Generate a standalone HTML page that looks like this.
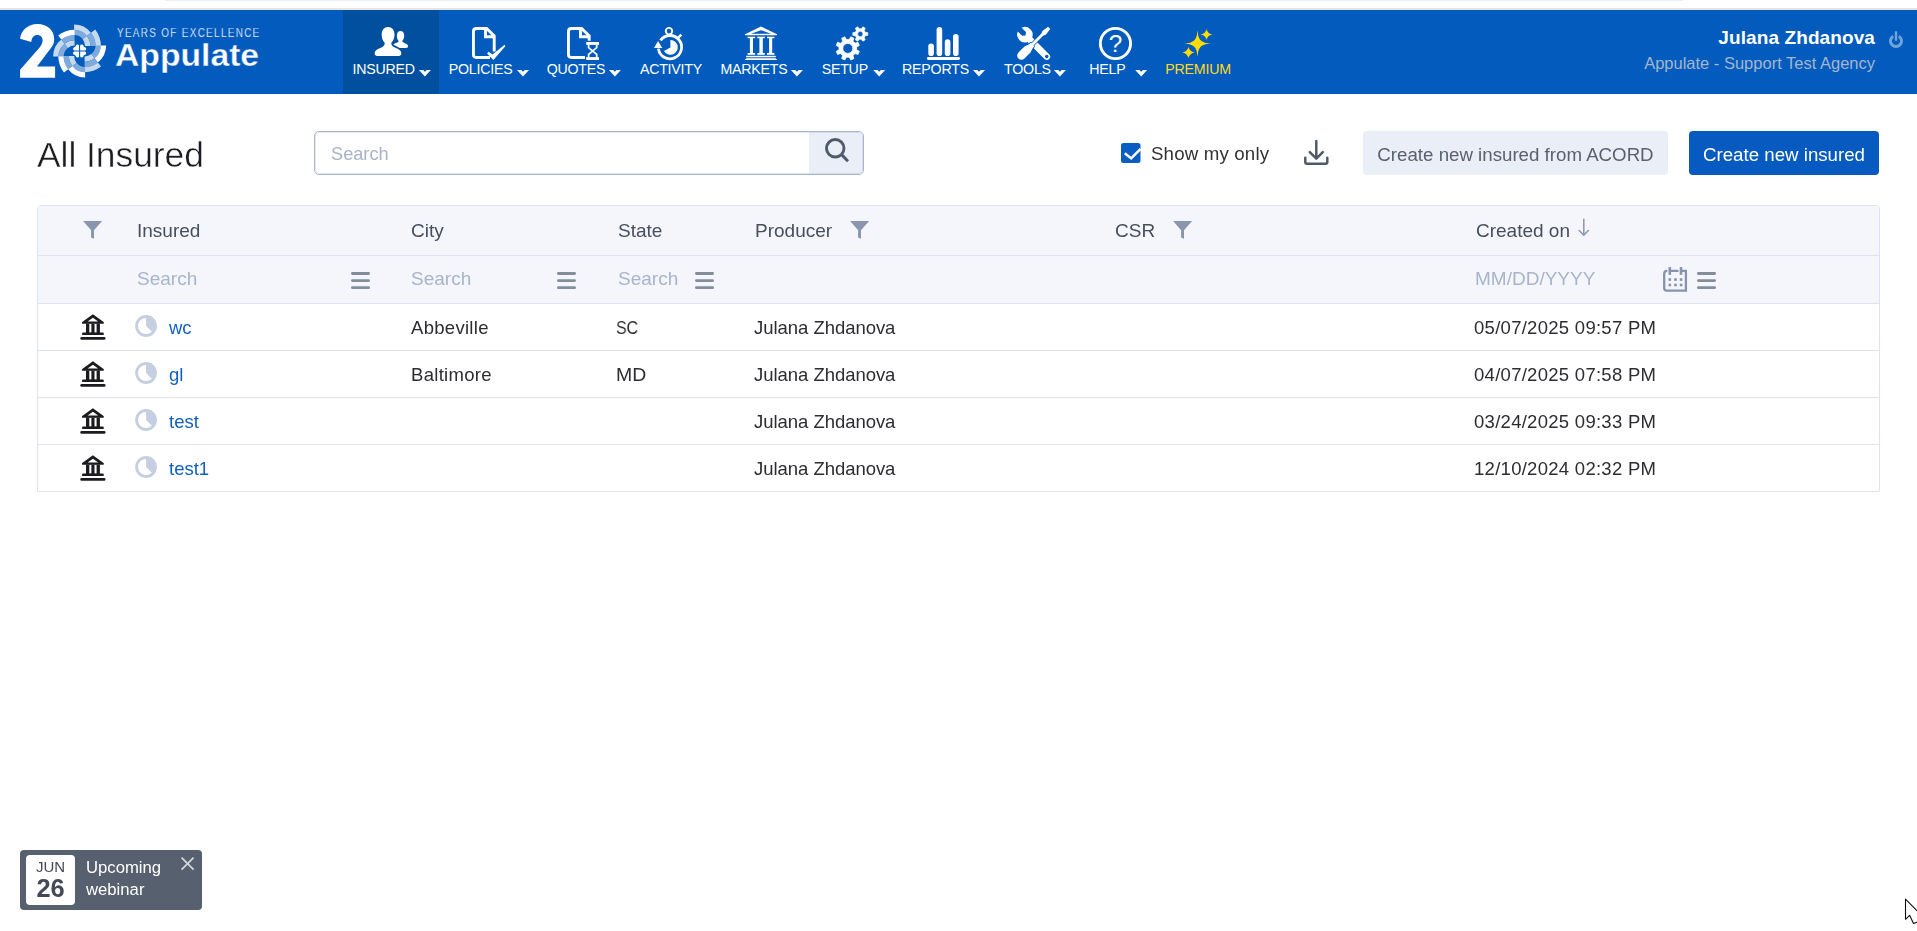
<!DOCTYPE html>
<html>
<head>
<meta charset="utf-8">
<title>All Insured</title>
<style>
*{box-sizing:border-box;margin:0;padding:0}
html,body{width:1917px;height:931px;overflow:hidden;background:#fff;font-family:"Liberation Sans",sans-serif;color:#333}
.abs{position:absolute}
#title,#sbox .ph,#chklbl,#b1,#b2,.h,.f,.c,#toast{will-change:transform}
#topline{position:absolute;left:0;top:8px;width:1917px;height:2px;background:#e6e6e0}
#hdr{position:absolute;left:0;top:10px;width:1917px;height:84px;background:#025bbd}
#active{position:absolute;left:343px;top:0;width:96px;height:84px;background:#01509f}
.nav{position:absolute;top:51px;height:16px;font-size:14.2px;line-height:16px;color:#fff;white-space:nowrap;letter-spacing:-0.22px}
.nav.prem{color:#ffd91a}
.car{position:absolute;top:59px;width:10px;height:6px}
.ico{position:absolute}
#uname{position:absolute;right:42px;top:17px;font-size:19px;letter-spacing:0.1px;line-height:22px;font-weight:bold;color:#fff;white-space:nowrap}
#uag{position:absolute;right:42px;top:43px;font-size:16.5px;line-height:20px;color:#a2b6cf;white-space:nowrap}
#title{position:absolute;left:36.7px;top:133px;font-size:35.4px;line-height:44px;color:#1c1c22;white-space:nowrap;letter-spacing:-0.03px;-webkit-text-stroke:0.45px #fff}
#sbox{position:absolute;left:314px;top:131px;width:550px;height:44px;border:1px solid #a9b5cd;border-radius:5px;background:#fff;overflow:hidden}
#sbox::after{content:"";position:absolute;left:0;top:0;right:0;bottom:0;border:1px solid rgba(169,181,205,.3);border-radius:4px}
#sbox .ph{position:absolute;left:16px;top:12.4px;font-size:18.2px;line-height:20px;color:#a9b3c9}
#sbox .btn{position:absolute;right:0;top:0;width:54px;height:42px;background:#eaeef7}
#chk{position:absolute;left:1121px;top:143px;width:20px;height:20px;background:#0a5dc2;border-radius:3px}
#chklbl{position:absolute;left:1150.8px;top:143.3px;font-size:18.7px;letter-spacing:0.16px;line-height:22px;color:#333;white-space:nowrap}
#b1{position:absolute;left:1363px;top:131px;width:305px;height:44px;background:#eaeef7;border-radius:4px;font-size:18.7px;line-height:48.4px;text-align:center;color:#596170;white-space:nowrap}
#b2{position:absolute;left:1689px;top:131px;width:190px;height:44px;background:#075abf;border-radius:4px;font-size:18.7px;line-height:48.4px;text-align:center;color:#fff;white-space:nowrap}
#tbl{position:absolute;left:37px;top:205px;width:1843px;height:287px;border:1px solid #dfe3ee;border-radius:4px 4px 0 0;background:#fff;overflow:hidden}
#th{position:absolute;left:0;top:0;width:1841px;height:50px;background:#f5f6fb;border-bottom:1px solid #dfe3ee}
#tf{position:absolute;left:0;top:50px;width:1841px;height:48px;background:#f5f6fb;border-bottom:1px solid #dfe3ee}
.h{position:absolute;top:219.6px;font-size:19px;line-height:22px;color:#474e5c;white-space:nowrap}
.f{position:absolute;top:267.5px;font-size:19px;line-height:22px;color:#a9b4cb;white-space:nowrap}
.row{position:absolute;left:38px;width:1841px;height:1px;background:#dfe3ee}
.c{position:absolute;font-size:18.5px;line-height:22px;color:#2c2c31;white-space:nowrap}
.c.ci{letter-spacing:0.3px}
.c.st{transform:scaleX(0.86);transform-origin:0 0}
.c.p{letter-spacing:-0.04px}
.c.d{letter-spacing:0.28px}
.c a{color:#1060bf;text-decoration:none}
#toast{position:absolute;left:20px;top:850px;width:182px;height:60px;background:#57606e;border-radius:4px}
#toast .d{position:absolute;left:6px;top:5px;width:49px;height:50px;background:#fff;border-radius:4px;text-align:center;color:#454857}
#toast .m{position:absolute;left:0;width:49px;top:4px;font-size:15px;line-height:16px}
#toast .n{position:absolute;left:0;width:49px;top:20.3px;font-size:25.4px;line-height:26px;font-weight:bold}
#yoe{position:absolute;left:117px;top:17px;font-size:12px;line-height:12px;color:#fff;white-space:nowrap;letter-spacing:1.6px;transform:scaleX(0.826);transform-origin:0 0;-webkit-text-stroke:0.25px #025bbd}
#appl{position:absolute;left:115.2px;top:28.4px;font-size:31.7px;line-height:34px;font-weight:bold;color:#fff;white-space:nowrap;transform:scaleX(1.063);transform-origin:0 0;-webkit-text-stroke:0.35px #025bbd}
#toast .t{position:absolute;left:66px;top:7.3px;font-size:16.7px;line-height:21.8px;color:#fff;white-space:nowrap}
</style>
</head>
<body>
<div style="position:absolute;left:165px;top:0;width:1518px;height:1px;background:#e9eef7"></div>
<div id="topline"></div>
<div id="hdr">
  <div id="active"></div>
  <svg class="ico" style="left:0;top:0" width="300" height="84" viewBox="0 0 300 84"><path d="M20.10 28.80 C20.60 21.50 27.50 14.10 37.40 14.10 C47.50 14.10 54.20 20.50 54.20 29.20 C54.20 33.50 52.80 36.00 50.20 39.00 L37.00 56.50 L55.10 56.50 L55.10 67.80 L20.10 67.80 L20.10 59.80 L39.60 37.40 C41.80 34.60 42.60 32.60 42.60 30.20 C42.60 27.20 40.40 25.10 37.40 25.10 C33.80 25.10 31.60 27.80 31.30 32.00 Z" fill="#fff"/><path d="M74.10 19.80 A16.20 16.20 0 0 1 86.87 26.03 L82.69 29.29 A10.90 10.90 0 0 0 74.10 25.10 Z" fill="#7eaadc"/>
<path d="M86.87 26.03 A16.20 16.20 0 0 1 90.30 36.00 L85.00 36.00 A10.90 10.90 0 0 0 82.69 29.29 Z" fill="#c5d9ef"/>
<path d="M74.10 14.50 A21.50 21.50 0 0 1 91.04 22.76 L86.87 26.03 A16.20 16.20 0 0 0 74.10 19.80 Z" fill="#c5d9ef"/>
<path d="M91.04 22.76 A21.50 21.50 0 0 1 95.60 36.00 L90.30 36.00 A16.20 16.20 0 0 0 86.87 26.03 Z" fill="#7eaadc"/>
<path d="M95.22 19.50 A26.80 26.80 0 0 1 100.90 36.00 L95.60 36.00 A21.50 21.50 0 0 0 91.04 22.76 Z" fill="#c5d9ef"/>
<path d="M100.80 35.50 A16.20 16.20 0 0 1 94.57 48.27 L91.31 44.09 A10.90 10.90 0 0 0 95.50 35.50 Z" fill="#7eaadc"/>
<path d="M94.57 48.27 A16.20 16.20 0 0 1 84.60 51.70 L84.60 46.40 A10.90 10.90 0 0 0 91.31 44.09 Z" fill="#c5d9ef"/>
<path d="M106.10 35.50 A21.50 21.50 0 0 1 97.84 52.44 L94.57 48.27 A16.20 16.20 0 0 0 100.80 35.50 Z" fill="#ffffff"/>
<path d="M97.84 52.44 A21.50 21.50 0 0 1 84.60 57.00 L84.60 51.70 A16.20 16.20 0 0 0 94.57 48.27 Z" fill="#7eaadc"/>
<path d="M101.10 56.62 A26.80 26.80 0 0 1 84.60 62.30 L84.60 57.00 A21.50 21.50 0 0 0 97.84 52.44 Z" fill="#c5d9ef"/>
<path d="M85.10 62.20 A16.20 16.20 0 0 1 72.33 55.97 L76.51 52.71 A10.90 10.90 0 0 0 85.10 56.90 Z" fill="#7eaadc"/>
<path d="M72.33 55.97 A16.20 16.20 0 0 1 68.90 46.00 L74.20 46.00 A10.90 10.90 0 0 0 76.51 52.71 Z" fill="#c5d9ef"/>
<path d="M85.10 67.50 A21.50 21.50 0 0 1 68.16 59.24 L72.33 55.97 A16.20 16.20 0 0 0 85.10 62.20 Z" fill="#ffffff"/>
<path d="M68.16 59.24 A21.50 21.50 0 0 1 63.60 46.00 L68.90 46.00 A16.20 16.20 0 0 0 72.33 55.97 Z" fill="#7eaadc"/>
<path d="M63.98 62.50 A26.80 26.80 0 0 1 58.30 46.00 L63.60 46.00 A21.50 21.50 0 0 0 68.16 59.24 Z" fill="#ffffff"/>
<path d="M58.40 46.50 A16.20 16.20 0 0 1 64.63 33.73 L67.89 37.91 A10.90 10.90 0 0 0 63.70 46.50 Z" fill="#7eaadc"/>
<path d="M64.63 33.73 A16.20 16.20 0 0 1 74.60 30.30 L74.60 35.60 A10.90 10.90 0 0 0 67.89 37.91 Z" fill="#c5d9ef"/>
<path d="M53.10 46.50 A21.50 21.50 0 0 1 61.36 29.56 L64.63 33.73 A16.20 16.20 0 0 0 58.40 46.50 Z" fill="#c5d9ef"/>
<path d="M61.36 29.56 A21.50 21.50 0 0 1 74.60 25.00 L74.60 30.30 A16.20 16.20 0 0 0 64.63 33.73 Z" fill="#7eaadc"/>
<path d="M58.10 25.38 A26.80 26.80 0 0 1 74.60 19.70 L74.60 25.00 A21.50 21.50 0 0 0 61.36 29.56 Z" fill="#ffffff"/>
<path transform="rotate(0 79.6 41.0)" d="M80.14999999999999 40.45 L80.14999999999999 35.8 Q80.3 34.3 82.0 34.5 Q83.5 34.8 83.69999999999999 36.4 L84.3 37.0 Q86.0 37.2 86.19999999999999 38.7 Q86.3 40.3 84.8 40.45 Z" fill="#fff"/>
<path transform="rotate(90 79.6 41.0)" d="M80.14999999999999 40.45 L80.14999999999999 35.8 Q80.3 34.3 82.0 34.5 Q83.5 34.8 83.69999999999999 36.4 L84.3 37.0 Q86.0 37.2 86.19999999999999 38.7 Q86.3 40.3 84.8 40.45 Z" fill="#fff"/>
<path transform="rotate(180 79.6 41.0)" d="M80.14999999999999 40.45 L80.14999999999999 35.8 Q80.3 34.3 82.0 34.5 Q83.5 34.8 83.69999999999999 36.4 L84.3 37.0 Q86.0 37.2 86.19999999999999 38.7 Q86.3 40.3 84.8 40.45 Z" fill="#fff"/>
<path transform="rotate(270 79.6 41.0)" d="M80.14999999999999 40.45 L80.14999999999999 35.8 Q80.3 34.3 82.0 34.5 Q83.5 34.8 83.69999999999999 36.4 L84.3 37.0 Q86.0 37.2 86.19999999999999 38.7 Q86.3 40.3 84.8 40.45 Z" fill="#fff"/></svg><div id="yoe">YEARS OF EXCELLENCE</div><div id="appl">Appulate</div>
  <div class="nav" style="left:352.5px">INSURED</div>
<div class="nav" style="left:448.8px">POLICIES</div>
<div class="nav" style="left:546.7px">QUOTES</div>
<div class="nav" style="left:639.9px">ACTIVITY</div>
<div class="nav" style="left:720.4px">MARKETS</div>
<div class="nav" style="left:821.7px">SETUP</div>
<div class="nav" style="left:902.1px">REPORTS</div>
<div class="nav" style="left:1004.1px">TOOLS</div>
<div class="nav" style="left:1089.3px">HELP</div>
<div class="nav prem" style="left:1165.3px">PREMIUM</div>
<svg class="ico" style="left:0;top:0" width="1917" height="84" viewBox="0 0 1917 84"><path d="M418.9 60 L423.2 60 L424.9 61.7 L426.6 60 L430.9 60 L424.9 66.4 Z" fill="#fff"/><path d="M517.0 60 L521.3 60 L523.0 61.7 L524.7 60 L529.0 60 L523.0 66.4 Z" fill="#fff"/><path d="M608.9 60 L613.2 60 L614.9 61.7 L616.6 60 L620.9 60 L614.9 66.4 Z" fill="#fff"/><path d="M790.9 60 L795.2 60 L796.9 61.7 L798.6 60 L802.9 60 L796.9 66.4 Z" fill="#fff"/><path d="M873.2 60 L877.5 60 L879.2 61.7 L880.9 60 L885.2 60 L879.2 66.4 Z" fill="#fff"/><path d="M973.0 60 L977.3 60 L979.0 61.7 L980.7 60 L985.0 60 L979.0 66.4 Z" fill="#fff"/><path d="M1053.9 60 L1058.2 60 L1059.9 61.7 L1061.6 60 L1065.9 60 L1059.9 66.4 Z" fill="#fff"/><path d="M1135.2 60 L1139.5 60 L1141.2 61.7 L1142.9 60 L1147.2 60 L1141.2 66.4 Z" fill="#fff"/></svg>
<svg class="ico" style="left:365px;top:10px" width="60" height="45" viewBox="0 0 60 45"><path d="M35.5 11 C37.8 11 39.2 12.8 39.2 15.5 C39.2 18 38.3 19.8 37.3 20.8 C37.3 21.8 38 22.3 39 22.8 L41.5 24 C42.6 24.6 43 25.3 43 26.3 C43 27.3 42.3 28 41.3 28 L34.8 28 L28.3 24.6 C28.8 23.8 30 23.4 31 23 L32.5 22.4 C33.4 22 33.7 21.5 33.6 20.8 C32.6 19.8 31.9 18 31.9 15.5 C31.9 12.8 33.2 11 35.5 11 Z" fill="#fff"/><path d="M23.1 7 C27 7 29.5 10 29.5 14.5 C29.5 18.5 28 21 26.4 22.5 C26 24.6 27 26 29 27 L33 28.9 C35.5 30.1 36.3 31.5 36.3 33.5 C36.3 35 35.3 36 33.8 36 L12.2 36 C10.7 36 9.7 35 9.7 33.5 C9.7 31.5 10.5 30.1 13 28.9 L17 27.2 C19 26.2 20 24.6 19.6 22.5 C18 21 16.7 18.5 16.7 14.5 C16.7 10 19.2 7 23.1 7 Z" fill="#fff" stroke="#01509f" stroke-width="1.6" paint-order="stroke"/></svg>
<svg class="ico" style="left:460px;top:10px" width="60" height="45" viewBox="0 0 60 45"><path d="M34.2 31.5 V15.9 L26.6 8.45 H16.4 Q13.45 8.45 13.45 11.4 V34.5 Q13.45 37.45 16.4 37.45 H30" fill="none" stroke="#fff" stroke-width="2.9" stroke-linejoin="miter"/><path d="M25.5 8.5 V16.7 H34.2" fill="none" stroke="#fff" stroke-width="2.9"/><path d="M27.1 33.4 L28.6 31.8 L32.5 34.6 L44.6 24.8 L45.3 26.2 L33.4 40 Z" fill="#fff"/></svg>
<svg class="ico" style="left:555px;top:10px" width="60" height="45" viewBox="0 0 60 45"><path d="M34.2 20.8 V15.9 L26.6 8.45 H16.4 Q13.45 8.45 13.45 11.4 V34.5 Q13.45 37.45 16.4 37.45 H30" fill="none" stroke="#fff" stroke-width="2.9" stroke-linejoin="miter"/><path d="M25.5 8.5 V16.7 H34.2" fill="none" stroke="#fff" stroke-width="2.9"/><rect x="31.2" y="22" width="12.8" height="2.9" fill="#fff"/><rect x="31.2" y="37.1" width="12.8" height="2.9" fill="#fff"/><path d="M33.6 24.5 V27.6 L41.7 34.4 V37.5 M41.7 24.5 V27.6 L33.6 34.4 V37.5" fill="none" stroke="#fff" stroke-width="1.7"/></svg>
<svg class="ico" style="left:640px;top:10px" width="60" height="45" viewBox="0 0 60 45"><path d="M20.46 20.4 A11.65 11.65 0 1 1 18.4 28.6" fill="none" stroke="#fff" stroke-width="2.8"/><path d="M18.1 21 L22.3 27.9 L14 27.9 Z" fill="#fff"/><circle cx="29" cy="11.1" r="3.25" fill="none" stroke="#fff" stroke-width="1.9"/><path d="M38.3 17.7 L41.3 14.7" stroke="#fff" stroke-width="2.6" fill="none"/><path d="M30.4 27.4 L30.4 19.9 A7.4 7.4 0 1 1 24 31.1 Z" fill="#fff"/></svg>
<svg class="ico" style="left:730px;top:10px" width="60" height="45" viewBox="0 0 60 45"><path fill-rule="evenodd" d="M30.95 6.6 L47 14.2 L47 15.3 L15 15.3 L15 14.2 Z M30.95 10.2 L21 13.7 L41 13.7 Z" fill="#fff"/><rect x="17.6" y="16.7" width="7.5" height="1.5" fill="#fff"/><rect x="19.9" y="17" width="3.1" height="16.5" fill="#fff"/><rect x="17.6" y="33" width="7.5" height="1.8" fill="#fff"/><rect x="27.3" y="16.7" width="7.5" height="1.5" fill="#fff"/><rect x="29.4" y="17" width="3.4" height="16.5" fill="#fff"/><rect x="27.3" y="33" width="7.5" height="1.8" fill="#fff"/><rect x="37.0" y="16.7" width="7.4" height="1.5" fill="#fff"/><rect x="39.1" y="17" width="3.1" height="16.5" fill="#fff"/><rect x="37.0" y="33" width="7.4" height="1.8" fill="#fff"/><rect x="16.2" y="35.8" width="29.6" height="1.5" fill="#fff"/><path d="M16.5 38.2 L45.5 38.2 L47 39.4 L47 40.1 L15 40.1 L15 39.4 Z" fill="#fff"/></svg>
<svg class="ico" style="left:820px;top:10px" width="60" height="45" viewBox="0 0 60 45"><path d="M36.58 29.86 L39.33 31.36 L38.04 34.46 L35.04 33.57 L32.97 35.64 L33.86 38.64 L30.76 39.93 L29.26 37.18 L26.34 37.18 L24.84 39.93 L21.74 38.64 L22.63 35.64 L20.56 33.57 L17.56 34.46 L16.27 31.36 L19.02 29.86 L19.02 26.94 L16.27 25.44 L17.56 22.34 L20.56 23.23 L22.63 21.16 L21.74 18.16 L24.84 16.87 L26.34 19.62 L29.26 19.62 L30.76 16.87 L33.86 18.16 L32.97 21.16 L35.04 23.23 L38.04 22.34 L39.33 25.44 L36.58 26.94 Z M22.80 28.40 a5.00 5.00 0 1 0 10.00 0 a5.00 5.00 0 1 0 -10.00 0 Z" fill="#fff" fill-rule="evenodd" stroke="#fff" stroke-width="0.8" stroke-linejoin="round"/><path d="M45.34 12.36 L47.78 12.65 L47.78 15.35 L45.34 15.64 L44.24 17.55 L45.21 19.80 L42.87 21.15 L41.40 19.18 L39.20 19.18 L37.73 21.15 L35.39 19.80 L36.36 17.55 L35.26 15.64 L32.82 15.35 L32.82 12.65 L35.26 12.36 L36.36 10.45 L35.39 8.20 L37.73 6.85 L39.20 8.82 L41.40 8.82 L42.87 6.85 L45.21 8.20 L44.24 10.45 Z M37.60 14.00 a2.70 2.70 0 1 0 5.40 0 a2.70 2.70 0 1 0 -5.40 0 Z" fill="#fff" fill-rule="evenodd" stroke="#fff" stroke-width="0.7" stroke-linejoin="round"/></svg>
<svg class="ico" style="left:910px;top:10px" width="60" height="45" viewBox="0 0 60 45"><rect x="18.3" y="23.5" width="5.6" height="12.5" rx="2.8" fill="#fff"/><rect x="26.6" y="7.0" width="5.6" height="29.0" rx="2.8" fill="#fff"/><rect x="34.8" y="19.3" width="5.6" height="16.7" rx="2.8" fill="#fff"/><rect x="43.0" y="14.0" width="5.6" height="22.0" rx="2.8" fill="#fff"/><rect x="16.9" y="37.1" width="33.1" height="2.9" rx="1.45" fill="#fff"/></svg>
<svg class="ico" style="left:1000px;top:10px" width="60" height="45" viewBox="0 0 60 45"><g transform="translate(24.9 14.7) rotate(-45)"><path d="M-2.7 -7.3 A7.8 7.8 0 0 0 -3.3 7.0 L-3.3 31 A3.3 3.3 0 0 0 3.3 31 L3.3 7.0 A7.8 7.8 0 0 0 2.7 -7.3 L2.7 -1.2 L0 1.0 L-2.7 -1.2 Z M-1.7 30.9 a1.7 1.7 0 1 0 3.4 0 a1.7 1.7 0 1 0 -3.4 0 Z" fill="#fff" fill-rule="evenodd"/></g><g transform="translate(34.1 22.9) rotate(45)"><path d="M-1.5 -21.3 L1.5 -21.3 L2.4 -15 L2.3 -13.4 Q1.4 -12.6 1.4 -11.4 L1.4 2.0 L2.6 2.6 L2.6 4.0 Q3.2 6.5 4.2 9 L4.3 17.9 A4.3 4.3 0 0 1 -4.3 17.9 L-4.2 9 Q-3.2 6.5 -2.6 4.0 L-2.6 2.6 L-1.4 2.0 L-1.4 -11.4 Q-1.4 -12.6 -2.3 -13.4 L-2.4 -15 Z" fill="#fff" stroke="#025bbd" stroke-width="1.5" paint-order="stroke"/></g></svg>
<svg class="ico" style="left:1085px;top:10px" width="60" height="45" viewBox="0 0 60 45"><circle cx="30.45" cy="23.5" r="15.1" fill="none" stroke="#fff" stroke-width="2.9"/><text x="30.5" y="32.2" text-anchor="middle" font-family="Liberation Sans" font-size="24.3" fill="#fff">?</text></svg>
<svg class="ico" style="left:1165px;top:10px" width="60" height="45" viewBox="0 0 60 45"><path d="M32.47 10.37 L32.77 12.57 L33.02 14.48 L33.37 16.30 L34.20 18.13 L34.67 19.07 L35.29 19.97 L35.72 20.32 L36.07 20.75 L36.97 21.37 L37.91 21.84 L39.74 22.67 L41.56 23.02 L43.47 23.27 L45.67 23.57 L43.47 23.87 L41.56 24.12 L39.74 24.47 L37.91 25.30 L36.97 25.77 L36.07 26.39 L35.72 26.82 L35.29 27.17 L34.67 28.07 L34.20 29.01 L33.37 30.84 L33.02 32.66 L32.77 34.57 L32.47 36.77 L32.17 34.57 L31.92 32.66 L31.57 30.84 L30.74 29.01 L30.27 28.07 L29.65 27.17 L29.22 26.82 L28.87 26.39 L27.97 25.77 L27.03 25.30 L25.20 24.47 L23.38 24.12 L21.47 23.87 L19.27 23.57 L21.47 23.27 L23.38 23.02 L25.20 22.67 L27.03 21.84 L27.97 21.37 L28.87 20.75 L29.22 20.32 L29.65 19.97 L30.27 19.07 L30.74 18.13 L31.57 16.30 L31.92 14.48 L32.17 12.57 Z" fill="#ffdd00"/><path d="M41.50 8.90 L41.73 9.74 L42.00 10.64 L42.60 11.60 L43.41 12.65 L44.50 13.44 L45.50 14.01 L46.43 14.28 L47.30 14.50 L46.43 14.72 L45.50 14.99 L44.50 15.56 L43.41 16.35 L42.60 17.40 L42.00 18.36 L41.73 19.26 L41.50 20.10 L41.27 19.26 L41.00 18.36 L40.40 17.40 L39.59 16.35 L38.50 15.56 L37.50 14.99 L36.57 14.72 L35.70 14.50 L36.57 14.28 L37.50 14.01 L38.50 13.44 L39.59 12.65 L40.40 11.60 L41.00 10.64 L41.27 9.74 Z" fill="#ffdd00"/><path d="M23.46 26.80 L23.71 27.66 L24.00 28.57 L24.63 29.55 L25.51 30.62 L26.67 31.42 L27.73 32.00 L28.73 32.27 L29.66 32.50 L28.73 32.73 L27.73 33.00 L26.67 33.58 L25.51 34.38 L24.63 35.45 L24.00 36.43 L23.71 37.34 L23.46 38.20 L23.21 37.34 L22.92 36.43 L22.29 35.45 L21.41 34.38 L20.25 33.58 L19.19 33.00 L18.19 32.73 L17.26 32.50 L18.19 32.27 L19.19 32.00 L20.25 31.42 L21.41 30.62 L22.29 29.55 L22.92 28.57 L23.21 27.66 Z" fill="#ffdd00"/></svg>
<svg class="ico" style="left:1885.9px;top:18.9px" width="20" height="24" viewBox="0 0 20 24"><path d="M12.78 7.2 A5.55 5.55 0 1 1 7.22 7.2" fill="none" stroke="#6fa3dd" stroke-width="3"/><path d="M10 3.2 V10.8" stroke="#6fa3dd" stroke-width="2.4" stroke-linecap="round"/></svg>
  <div id="uname">Julana Zhdanova</div>
  <div id="uag">Appulate - Support Test Agency</div>
</div>

<div id="title">All Insured</div>
<div id="sbox"><div class="ph">Search</div><div class="btn"></div></div>
<div id="chklbl">Show my only</div>
<div id="b1">Create new insured from ACORD</div>
<div id="b2">Create new insured</div>

<div id="tbl"><div id="th"></div><div id="tf"></div></div>
<div class="h" style="left:137px">Insured</div>
<div class="h" style="left:411px">City</div>
<div class="h" style="left:618px">State</div>
<div class="h" style="left:755px">Producer</div>
<div class="h" style="left:1115px">CSR</div>
<div class="h" style="left:1476px">Created on</div>
<div class="f" style="left:137px">Search</div>
<div class="f" style="left:411px">Search</div>
<div class="f" style="left:618px">Search</div>
<div class="f" style="left:1475px">MM/DD/YYYY</div>

<div class="row" style="top:350px"></div>
<div class="row" style="top:397px"></div>
<div class="row" style="top:444px"></div>

<svg class="ico" style="left:79px;top:314px" width="28" height="27" viewBox="0 0 28 27"><path fill-rule="evenodd" d="M13.9 0.2 L24.6 8.0 Q25.2 8.6 24.6 9.8 L3.2 9.8 Q2.6 8.6 3.2 8.0 Z M13.9 3.8 L8.6 7.6 L19.2 7.6 Z" fill="#1b1b20"/><path d="M7 9.5 H20.9 V19 H7 Z M10.3 9.8 V18.7 H12.4 V9.8 Z M15.5 9.8 V18.7 H17.6 V9.8 Z" fill-rule="evenodd" fill="#1b1b20"/><rect x="3" y="18.5" width="21.8" height="2.6" rx="1.2" fill="#1b1b20"/><rect x="1.3" y="23" width="25.2" height="2.7" rx="1.3" fill="#1b1b20"/></svg>
<svg class="ico" style="left:134px;top:314px" width="24" height="24" viewBox="0 0 24 24"><circle cx="12.06" cy="12" r="9.5" fill="none" stroke="#c6cfe1" stroke-width="2.8"/><path d="M12.06 12 L12.06 2 A10 10 0 0 1 19.2 19.0 Z" fill="#c6cfe1"/></svg>
<div class="c" style="left:168.7px;top:316.75px"><a>wc</a></div>
<div class="c ci" style="left:410.6px;top:316.75px">Abbeville</div>
<div class="c st" style="left:616.4px;top:316.75px;transform:scaleX(0.86)">SC</div>
<div class="c p" style="left:754px;top:316.75px">Julana Zhdanova</div>
<div class="c d" style="left:1474px;top:316.75px">05/07/2025 09:57 PM</div>
<svg class="ico" style="left:79px;top:361px" width="28" height="27" viewBox="0 0 28 27"><path fill-rule="evenodd" d="M13.9 0.2 L24.6 8.0 Q25.2 8.6 24.6 9.8 L3.2 9.8 Q2.6 8.6 3.2 8.0 Z M13.9 3.8 L8.6 7.6 L19.2 7.6 Z" fill="#1b1b20"/><path d="M7 9.5 H20.9 V19 H7 Z M10.3 9.8 V18.7 H12.4 V9.8 Z M15.5 9.8 V18.7 H17.6 V9.8 Z" fill-rule="evenodd" fill="#1b1b20"/><rect x="3" y="18.5" width="21.8" height="2.6" rx="1.2" fill="#1b1b20"/><rect x="1.3" y="23" width="25.2" height="2.7" rx="1.3" fill="#1b1b20"/></svg>
<svg class="ico" style="left:134px;top:361px" width="24" height="24" viewBox="0 0 24 24"><circle cx="12.06" cy="12" r="9.5" fill="none" stroke="#c6cfe1" stroke-width="2.8"/><path d="M12.06 12 L12.06 2 A10 10 0 0 1 19.2 19.0 Z" fill="#c6cfe1"/></svg>
<div class="c" style="left:168.7px;top:363.75px"><a>gl</a></div>
<div class="c ci" style="left:410.6px;top:363.75px">Baltimore</div>
<div class="c st" style="left:616.4px;top:363.75px;transform:scaleX(1.05)">MD</div>
<div class="c p" style="left:754px;top:363.75px">Julana Zhdanova</div>
<div class="c d" style="left:1474px;top:363.75px">04/07/2025 07:58 PM</div>
<svg class="ico" style="left:79px;top:408px" width="28" height="27" viewBox="0 0 28 27"><path fill-rule="evenodd" d="M13.9 0.2 L24.6 8.0 Q25.2 8.6 24.6 9.8 L3.2 9.8 Q2.6 8.6 3.2 8.0 Z M13.9 3.8 L8.6 7.6 L19.2 7.6 Z" fill="#1b1b20"/><path d="M7 9.5 H20.9 V19 H7 Z M10.3 9.8 V18.7 H12.4 V9.8 Z M15.5 9.8 V18.7 H17.6 V9.8 Z" fill-rule="evenodd" fill="#1b1b20"/><rect x="3" y="18.5" width="21.8" height="2.6" rx="1.2" fill="#1b1b20"/><rect x="1.3" y="23" width="25.2" height="2.7" rx="1.3" fill="#1b1b20"/></svg>
<svg class="ico" style="left:134px;top:408px" width="24" height="24" viewBox="0 0 24 24"><circle cx="12.06" cy="12" r="9.5" fill="none" stroke="#c6cfe1" stroke-width="2.8"/><path d="M12.06 12 L12.06 2 A10 10 0 0 1 19.2 19.0 Z" fill="#c6cfe1"/></svg>
<div class="c" style="left:168.7px;top:410.75px"><a>test</a></div>
<div class="c p" style="left:754px;top:410.75px">Julana Zhdanova</div>
<div class="c d" style="left:1474px;top:410.75px">03/24/2025 09:33 PM</div>
<svg class="ico" style="left:79px;top:455px" width="28" height="27" viewBox="0 0 28 27"><path fill-rule="evenodd" d="M13.9 0.2 L24.6 8.0 Q25.2 8.6 24.6 9.8 L3.2 9.8 Q2.6 8.6 3.2 8.0 Z M13.9 3.8 L8.6 7.6 L19.2 7.6 Z" fill="#1b1b20"/><path d="M7 9.5 H20.9 V19 H7 Z M10.3 9.8 V18.7 H12.4 V9.8 Z M15.5 9.8 V18.7 H17.6 V9.8 Z" fill-rule="evenodd" fill="#1b1b20"/><rect x="3" y="18.5" width="21.8" height="2.6" rx="1.2" fill="#1b1b20"/><rect x="1.3" y="23" width="25.2" height="2.7" rx="1.3" fill="#1b1b20"/></svg>
<svg class="ico" style="left:134px;top:455px" width="24" height="24" viewBox="0 0 24 24"><circle cx="12.06" cy="12" r="9.5" fill="none" stroke="#c6cfe1" stroke-width="2.8"/><path d="M12.06 12 L12.06 2 A10 10 0 0 1 19.2 19.0 Z" fill="#c6cfe1"/></svg>
<div class="c" style="left:168.7px;top:457.75px"><a>test1</a></div>
<div class="c p" style="left:754px;top:457.75px">Julana Zhdanova</div>
<div class="c d" style="left:1474px;top:457.75px">12/10/2024 02:32 PM</div>
<svg class="ico" style="left:820px;top:133px" width="34" height="34" viewBox="0 0 34 34"><circle cx="15.25" cy="15.3" r="8.75" fill="none" stroke="#505a6b" stroke-width="2.9"/><path d="M21.6 21.6 L28.0 28.2" stroke="#505a6b" stroke-width="3"/></svg>
<svg class="ico" style="left:1121px;top:143px" width="20" height="20" viewBox="0 0 20 20"><rect x="0" y="0" width="19.5" height="20" rx="2.5" fill="#0a5dc2"/><path d="M3.8 10.2 L10.2 15.4 L19.6 5.8" fill="none" stroke="#fff" stroke-width="2.5"/></svg>
<svg class="ico" style="left:1300px;top:136px" width="32" height="32" viewBox="0 0 32 32"><path d="M16.3 5.0 V22 M9.8 16.1 L16.3 22.6 L22.8 16.1 M5.3 21.8 V26 Q5.3 27.7 7 27.7 H25.6 Q27.3 27.7 27.3 26 V21.8" fill="none" stroke="#4f596a" stroke-width="2.5" stroke-linecap="round" stroke-linejoin="round"/></svg>
<svg class="ico" style="left:83.05px;top:221px" width="20" height="19" viewBox="0 0 20 19"><path d="M0.1 0.1 H19.1 L11.0 9.3 V17.8 L8.1 16.4 V9.3 Z" fill="#8a96ad"/></svg>
<svg class="ico" style="left:849.8px;top:221px" width="20" height="19" viewBox="0 0 20 19"><path d="M0.1 0.1 H19.1 L11.0 9.3 V17.8 L8.1 16.4 V9.3 Z" fill="#8a96ad"/></svg>
<svg class="ico" style="left:1172.8px;top:221px" width="20" height="19" viewBox="0 0 20 19"><path d="M0.1 0.1 H19.1 L11.0 9.3 V17.8 L8.1 16.4 V9.3 Z" fill="#8a96ad"/></svg>
<svg class="ico" style="left:351px;top:272px" width="20" height="18" viewBox="0 0 20 18"><path d="M1.4 1.5 H17.6 M1.4 8.6 H17.6 M1.4 15.7 H17.6" stroke="#838d9c" stroke-width="2.8" stroke-linecap="round"/></svg>
<svg class="ico" style="left:557px;top:272px" width="20" height="18" viewBox="0 0 20 18"><path d="M1.4 1.5 H17.6 M1.4 8.6 H17.6 M1.4 15.7 H17.6" stroke="#838d9c" stroke-width="2.8" stroke-linecap="round"/></svg>
<svg class="ico" style="left:695px;top:272px" width="20" height="18" viewBox="0 0 20 18"><path d="M1.4 1.5 H17.6 M1.4 8.6 H17.6 M1.4 15.7 H17.6" stroke="#838d9c" stroke-width="2.8" stroke-linecap="round"/></svg>
<svg class="ico" style="left:1697px;top:272px" width="20" height="18" viewBox="0 0 20 18"><path d="M1.4 1.5 H17.6 M1.4 8.6 H17.6 M1.4 15.7 H17.6" stroke="#838d9c" stroke-width="2.8" stroke-linecap="round"/></svg>
<svg class="ico" style="left:1655px;top:260px" width="40" height="40" viewBox="0 0 40 40"><path d="M11.4 10.8 Q9.2 11.2 9.2 14 V28 Q9.2 30.7 12 30.7 H30.9 V10.9 H27.3 M15.9 10.9 H22.6" fill="none" stroke="#8593ad" stroke-width="2.3" stroke-linecap="round" stroke-linejoin="miter"/><rect x="13.5" y="7.1" width="2.6" height="7.7" fill="#8593ad"/><rect x="24.7" y="7.1" width="2.6" height="7.7" fill="#8593ad"/><rect x="13.50" y="18.25" width="2.6" height="2.6" fill="#8593ad"/><rect x="13.50" y="23.70" width="2.6" height="2.6" fill="#8593ad"/><rect x="19.20" y="18.25" width="2.6" height="2.6" fill="#8593ad"/><rect x="19.20" y="23.70" width="2.6" height="2.6" fill="#8593ad"/><rect x="24.80" y="18.25" width="2.6" height="2.6" fill="#8593ad"/><rect x="24.80" y="23.70" width="2.6" height="2.6" fill="#8593ad"/></svg>
<svg class="ico" style="left:1576px;top:216px" width="16" height="22" viewBox="0 0 16 22"><path d="M7.8 3.2 V19 M3.2 14.5 L7.8 19.2 L12.4 14.5" fill="none" stroke="#8a96ad" stroke-width="1.5" stroke-linecap="round" stroke-linejoin="round"/></svg>

<div id="toast">
  <div class="d"><div class="m">JUN</div><div class="n">26</div></div>
  <div class="t">Upcoming<br>webinar</div>
</div>
<svg class="ico" style="left:178px;top:854px" width="20" height="20" viewBox="0 0 20 20"><path d="M3.6 3.6 L15.6 15.6 M15.6 3.6 L3.6 15.6" stroke="#d2d5db" stroke-width="1.7"/></svg><svg class="ico" style="left:1900px;top:895px" width="17" height="36" viewBox="0 0 17 36"><path d="M5.5 4.2 L5.5 24.3 L9.6 20.3 L13.5 28.5 L20 25.8 L20 18.7 Z" fill="#fff" stroke="#111" stroke-width="1.1" stroke-linejoin="round"/></svg>
</body>
</html>
